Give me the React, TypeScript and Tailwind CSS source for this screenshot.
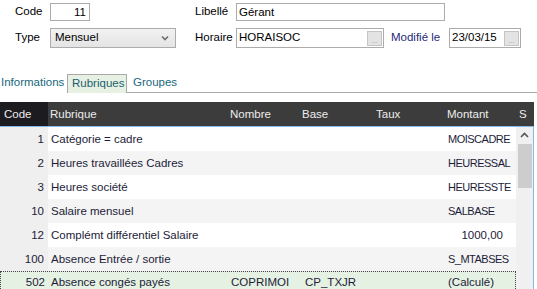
import React from "react";

type Row = {
  code: string;
  label: string;
  nombre?: string;
  base?: string;
  montant: string;
  num?: boolean;
  selected?: boolean;
};

const rows: Row[] = [
  { code: "1", label: "Catégorie = cadre", montant: "MOISCADRE" },
  { code: "2", label: "Heures travaillées Cadres", montant: "HEURESSAL" },
  { code: "3", label: "Heures société", montant: "HEURESSTE" },
  { code: "10", label: "Salaire mensuel", montant: "SALBASE" },
  { code: "12", label: "Complémt différentiel Salaire", montant: "1000,00", num: true },
  { code: "100", label: "Absence Entrée / sortie", montant: "S_MTABSES" },
  {
    code: "502",
    label: "Absence congés payés",
    nombre: "COPRIMOI",
    base: "CP_TXJR",
    montant: "(Calculé)",
    selected: true,
  },
];

function DotsButton() {
  return (
    <div className="w-[15px] h-[15px] border border-[#c4c4c4] bg-[#e3e3e3] flex items-end justify-center text-[7px] leading-[8px] text-[#9a9a9a]">
      ...
    </div>
  );
}

export default function App() {
  return (
    <div
      className="w-[537px] h-[289px] bg-white overflow-hidden text-[11.5px] text-black"
      style={{ fontFamily: '"Liberation Sans", Arial, sans-serif' }}
    >
      {/* form */}
      <div className="pt-[3px] flex flex-col gap-[7px]">
        <div className="flex items-center h-[18px]">
          <span className="ml-[15px] w-[35px]">Code</span>
          <div className="w-[40px] h-[18px] border border-[#acacac] text-right pr-[3px] leading-[16px]">
            11
          </div>
          <span className="ml-[105px] w-[41px]">Libellé</span>
          <div className="w-[209px] h-[18px] border border-[#acacac] pl-[2px] leading-[16px]">
            Gérant
          </div>
        </div>
        <div className="flex items-center h-[20px]">
          <span className="ml-[15px] w-[35px]">Type</span>
          <div className="w-[126px] h-[20px] border border-[#acacac] bg-gradient-to-b from-[#f2f2f2] to-[#e4e4e4] flex items-center justify-between pl-[4px] pr-[6px]">
            <span>Mensuel</span>
            <svg width="8" height="6" viewBox="0 0 8 6">
              <path d="M1 1.5 L4 4.5 L7 1.5" stroke="#6e6e6e" strokeWidth="1.6" fill="none" />
            </svg>
          </div>
          <span className="ml-[19px] w-[41px]">Horaire</span>
          <div className="w-[148px] h-[20px] border border-[#acacac] flex items-center justify-between pl-[2px] pr-[1px]">
            <span>HORAISOC</span>
            <DotsButton />
          </div>
          <span className="ml-[7px] w-[58px] text-[#1f2a7a]">Modifié le</span>
          <div className="w-[72px] h-[20px] border border-[#acacac] flex items-center justify-between pl-[2px] pr-[1px]">
            <span>23/03/15</span>
            <DotsButton />
          </div>
        </div>
      </div>

      {/* tabs */}
      <div className="mt-[26px] flex items-end h-[19px] text-[#17687d]">
        <span className="pl-[1px] w-[67px] pb-[2px]">Informations</span>
        <div className="w-[60px] h-[19px] border border-b-0 border-[#a9a9a9] bg-[#e6f1e4] pl-[4px] leading-[17px] text-[#1d5e6e]">
          Rubriques
        </div>
        <div className="flex-1 h-[19px] border-b border-[#a9a9a9] pl-[6px] leading-[17px]">
          Groupes
        </div>
      </div>

      {/* grid */}
      <div className="mt-[9px] w-[534px]">
        <div className="flex h-[24px] bg-[#3c3c3c] text-[#ececec] leading-[24px]">
          <div className="w-[48px] bg-[#1c1b20] pl-[4px]">Code</div>
          <div className="w-[180px] pl-[2px]">Rubrique</div>
          <div className="w-[72px] pl-[2px]">Nombre</div>
          <div className="w-[73px] pl-[2px]">Base</div>
          <div className="w-[72px] pl-[3px]">Taux</div>
          <div className="w-[71px] pl-[2px]">Montant</div>
          <div className="flex-1 pl-[3px]">S</div>
        </div>
        <div className="flex border-t border-r border-[#86b8e8] h-[166px] overflow-hidden">
          <div className="w-[516px] flex flex-col text-[#1c1c38]">
            {rows.map((r, i) => (
              <div
                key={r.code}
                className={
                  r.selected
                    ? "flex h-[24px] shrink-0 leading-[21px] bg-[#e5f1e2] border border-dotted border-[#444]"
                    : i % 2 === 0
                    ? "flex h-[24px] shrink-0 leading-[24px] bg-white"
                    : "flex h-[24px] shrink-0 leading-[24px] bg-[#f4f4f4]"
                }
              >
                <div
                  className={
                    r.selected
                      ? "w-[47px] text-right pr-[3px]"
                      : "w-[48px] text-right pr-[4px] bg-[#efefef]"
                  }
                >
                  {r.code}
                </div>
                <div className="w-[180px] pl-[3px]">{r.label}</div>
                <div className="w-[72px] pl-[3px]">{r.nombre}</div>
                <div className="w-[73px] pl-[5px]">{r.base}</div>
                <div className="w-[72px]"></div>
                <div
                  className={
                    r.num
                      ? "w-[58px] text-right"
                      : r.selected
                      ? "w-[70px] pl-[3px] whitespace-nowrap"
                      : "w-[71px] pl-[3px] whitespace-nowrap text-[11px] tracking-[-0.5px]"
                  }
                >
                  {r.montant}
                </div>
              </div>
            ))}
          </div>
          <div className="w-[17px] bg-[#f0f0f0] flex flex-col items-center">
            <div className="h-[16px] flex items-center justify-center">
              <svg width="9" height="6" viewBox="0 0 9 6">
                <path d="M1 5 L4.5 1.5 L8 5" stroke="#555" strokeWidth="1.6" fill="none" />
              </svg>
            </div>
            <div className="w-[14px] h-[44px] bg-[#cdcdcd] mt-[1px]" />
          </div>
        </div>
      </div>
    </div>
  );
}
